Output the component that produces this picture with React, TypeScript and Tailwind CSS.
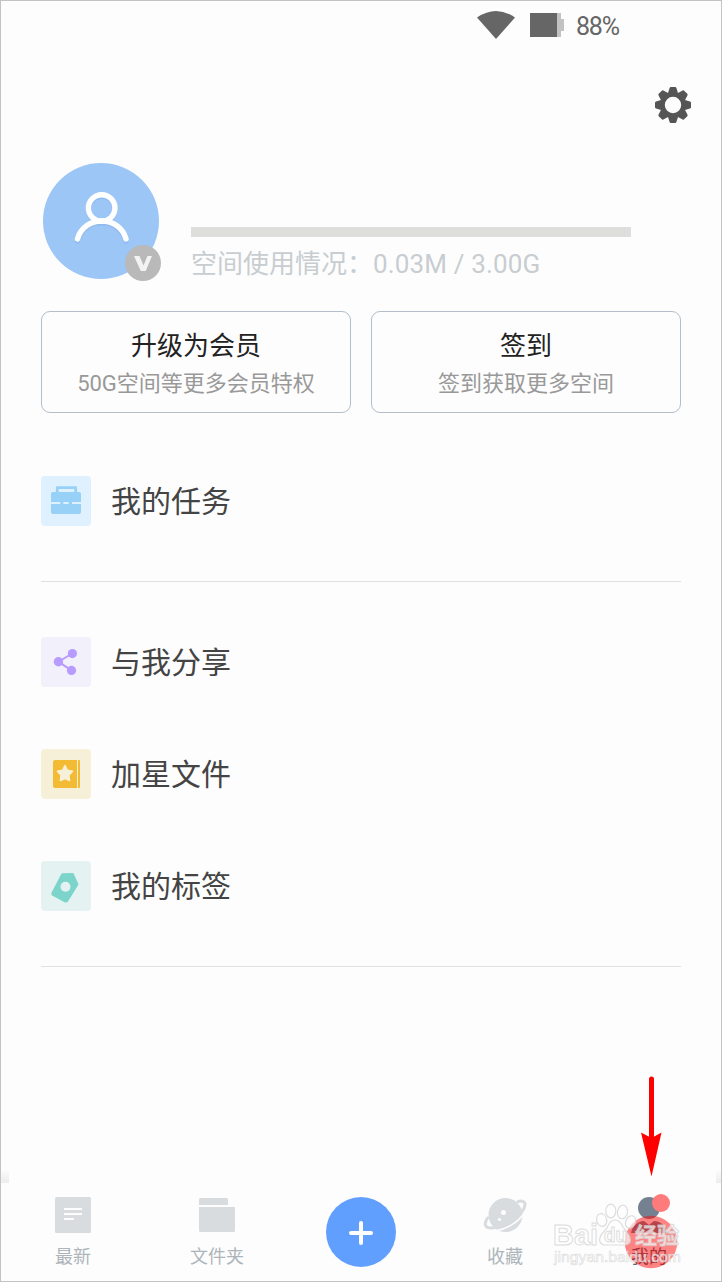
import type { ReactNode } from "react";

const TaskIcon = () => (
  <svg viewBox="0 0 50 50" className="size-[50px]">
    <path d="M16.3 17v-5.300h18.400V17" fill="none" stroke="#97d1f7" strokeWidth="2.800" strokeLinejoin="round" />
    <rect x="10" y="16" width="30" height="22" rx="2" fill="#97d1f7" />
    <path d="M10 27h9.3M22.3 27h5.4M31 27h9" stroke="#dff1ff" strokeWidth="2" />
  </svg>
);

const ShareIcon = () => (
  <svg viewBox="0 0 50 50" className="size-[50px]" fill="#b79bff">
    <path d="M31.3 16.5L17.4 24.7L30.5 33.4" fill="none" stroke="#b79bff" strokeWidth="2" />
    <circle cx="31.4" cy="16.6" r="4.6" />
    <circle cx="17.4" cy="24.7" r="4.7" />
    <circle cx="30.5" cy="33.4" r="4.6" />
  </svg>
);

const StarFileIcon = () => (
  <svg viewBox="0 0 50 50" className="size-[50px]">
    <path d="M14 11h22v28H14a2 2 0 0 1-2-2V13a2 2 0 0 1 2-2z" fill="#f3bb33" />
    <path d="M37 11h1q1 0 1 1v26q0 1-1 1h-1z" fill="#f3bb33" />
    <path d="M24 16.700l2.300 4.600 5.200 1-3.700 4 .7 5.200-4.500-2.100-4.600 2.100.7-5.200-3.700-4 5.200-1z" fill="#f7f0d9" stroke="#f7f0d9" strokeWidth="1.600" strokeLinejoin="round" />
  </svg>
);

const TagIcon = () => (
  <svg viewBox="0 0 50 50" className="size-[50px]">
    <path d="M21.500 13.700L31.500 13.300L36 23.300L26 39.600Q25.300 40.400 24.200 40L12.200 33.600Q11.500 33 11.800 32.100z" fill="#7cd4cb" stroke="#7cd4cb" strokeWidth="2.800" strokeLinejoin="round" />
    <circle cx="24.500" cy="25.800" r="5" fill="#e4f3f2" />
  </svg>
);

const NewestIcon = () => (
  <svg viewBox="0 0 36 36" className="size-9">
    <rect width="36" height="36" rx="1.5" fill="#d8dcdf" />
    <path d="M9 12h18M9 17h18M9 22h10" stroke="#fdfdfd" strokeWidth="2.2" />
  </svg>
);

const FolderIcon = () => (
  <svg viewBox="0 0 36 36" className="size-9" fill="#d8dcdf">
    <path d="M1.500 1H27.500Q29 1 29 2.500V8H0V2.500Q0 1 1.500 1z" />
    <path d="M0 10H36V33.500Q36 35 34.500 35H1.500Q0 35 0 33.500z" />
  </svg>
);

const PlanetIcon = () => (
  <svg viewBox="0 0 44 36" className="h-9 w-11">
    <circle cx="22.500" cy="18" r="17" fill="#d8dcdf" />
    <path d="M13 33.800C23 32 34.500 26 40 17.500" fill="none" stroke="#fdfdfd" strokeWidth="1.600" />
    <path d="M4.500 21C1 26 1.500 30.500 7 31C20 31 41 18 42 8C42.300 4 38.500 3.600 35 4.600" fill="none" stroke="#d8dcdf" strokeWidth="3" strokeLinecap="round" />
    <circle cx="20.500" cy="15.500" r="2.500" fill="#fdfdfd" />
    <circle cx="16.500" cy="22.500" r="1.600" fill="#fdfdfd" />
  </svg>
);

const MineIcon = () => (
  <svg viewBox="0 0 36 36" className="size-9" fill="#758191">
    <circle cx="18" cy="11" r="11" />
    <path d="M0 36C1 29 7 24 13 24L18 28L23 24C30 24 35 29 36 36z" />
  </svg>
);

function MenuRow({ icon, label, bg }: { icon: ReactNode; label: string; bg: string }) {
  return (
    <div className="flex h-[50px] items-center gap-5">
      <div className={`size-[50px] overflow-hidden rounded ${bg}`}>{icon}</div>
      <span className="pt-0.5 text-[30px] leading-[50px] text-[#444]">{label}</span>
    </div>
  );
}

function InfoCard({ title, text }: { title: string; text: string }) {
  return (
    <div className="flex h-[102px] w-[310px] flex-col items-center rounded-[9px] border border-[#b3bec8] pt-[15px]">
      <span className="text-[26px] leading-[38px] text-[#222]">{title}</span>
      <span className="text-[22px] leading-[38px] text-[#999]">{text}</span>
    </div>
  );
}

function Tab({ icon, label, className = "text-[#adb5bb]" }: { icon: ReactNode; label: string; className?: string }) {
  return (
    <div className={`flex w-36 flex-col items-center pt-3.5 ${className}`}>
      {icon}
      <span className="mt-[11px] text-lg leading-[26px]">{label}</span>
    </div>
  );
}

export default function App() {
  return (
    <div className="relative flex h-[1282px] w-[722px] flex-col overflow-hidden border border-[#c3c3c3] bg-[#fdfdfd] font-['Roboto','Noto_Sans_CJK_SC',sans-serif]">
      {/* Status bar */}
      <div className="flex h-12 items-center justify-end pr-[102px] text-[#666]">
        <svg viewBox="0 0 38 28" className="mr-[15px] h-7 w-[38px]" fill="#666">
          <path d="M0 6.500Q19-6.500 38 6.500L19 28z" />
        </svg>
        <svg viewBox="0 0 34 24" className="mr-3 h-6 w-[34px]">
          <path d="M27 0h4v6h3v12h-3v6h-4z" fill="#c2c2c2" />
          <path d="M0 0h27v24H0z" fill="#666" />
        </svg>
        <span className="w-[43px] pt-[3px] text-[25px] leading-6 tracking-[-1.2px]">88%</span>
      </div>

      {/* Settings */}
      <div className="flex h-[114px] justify-end pt-[38px] pr-[30px]">
        <svg viewBox="-18 -18 36 36" className="size-9" fill="#555">
          {[0, 45, 90, 135, 180, 225, 270, 315].map((angle) => (
            <path key={angle} transform={`rotate(${angle})`} d="M-5.300-11L-3.400-17Q-3.100-18-2.200-18H2.200Q3.100-18 3.400-17L5.300-11z" />
          ))}
          <circle r="10.600" fill="none" stroke="#555" strokeWidth="4.800" />
        </svg>
      </div>

      {/* Profile */}
      <div className="flex h-[148px] pl-[42px]">
        <div className="relative size-[116px]">
          <svg viewBox="0 0 116 116" className="size-[116px]">
            <circle cx="58" cy="58" r="58" fill="#9cc6f6" />
            <g fill="none" strokeWidth="5.400" strokeLinecap="round">
              <g stroke="#78a4d8" opacity=".3" transform="translate(0 1.500)">
                <circle cx="58.700" cy="45" r="13.300" />
                <path d="M34.500 76.500C41 52 76.500 52 83 76.500" />
              </g>
              <g stroke="#fff">
                <circle cx="58.700" cy="45" r="13.300" />
                <path d="M34.500 76C41 52 76.500 52 83 76" />
              </g>
            </g>
          </svg>
          <svg viewBox="0 0 36 36" className="absolute -right-0.5 -bottom-0.5 size-9">
            <circle cx="18" cy="18" r="18" fill="#b9b9b9" />
            <path d="M9 11h5.500l4 9.500 4-9.500H27l-6.300 15h-4.900z" fill="#f3f3f3" />
          </svg>
        </div>
        <div className="ml-8 pt-16">
          <div className="h-2.5 w-[440px] bg-[#dededc]" />
          <div className="mt-2 text-[26px] leading-[38px] text-[#c8cdd1]">
            空间使用情况：<span className="tracking-[0.15px]">0.03M / 3.00G</span>
          </div>
        </div>
      </div>

      <div className="flex gap-5 px-10">
        <InfoCard title="升级为会员" text="50G空间等更多会员特权" />
        <InfoCard title="签到" text="签到获取更多空间" />
      </div>

      <div className="mx-10 mt-[63px] border-b border-[#e1e1e1] pb-[55px]">
        <MenuRow icon={<TaskIcon />} label="我的任务" bg="bg-[#dff1ff]" />
      </div>
      <div className="mx-10 flex flex-col gap-[62px] border-b border-[#e1e1e1] pt-[55px] pb-[55px]">
        <MenuRow icon={<ShareIcon />} label="与我分享" bg="bg-[#f2f0fb]" />
        <MenuRow icon={<StarFileIcon />} label="加星文件" bg="bg-[#f7f0d9]" />
        <MenuRow icon={<TagIcon />} label="我的标签" bg="bg-[#e4f3f2]" />
      </div>

      {/* Bottom tabs */}
      <div className="mt-auto flex h-3.5 justify-between">
        <div className="w-2 bg-linear-to-b from-[#fdfdfd] to-[#ececec]" />
        <div className="w-[5px] bg-linear-to-b from-[#fdfdfd] to-[#ececec]" />
      </div>
      <div className="flex h-[98px]">
        <Tab icon={<NewestIcon />} label="最新" />
        <Tab icon={<FolderIcon />} label="文件夹" />
        <div className="flex w-36 justify-center pt-3.5">
          <svg viewBox="0 0 70 70" className="size-[70px]">
            <circle cx="35" cy="35" r="35" fill="#619fff" />
            <path d="M35 26v20M25 36h20" stroke="#fff" strokeWidth="4" strokeLinecap="round" />
          </svg>
        </div>
        <Tab icon={<PlanetIcon />} label="收藏" />
        <Tab icon={<MineIcon />} label="我的" className="text-[#58636f]" />
      </div>

      {/* Arrow and touch marker over the last tab */}
      <svg viewBox="540 1070 181 211" className="absolute right-0 bottom-0 h-[211px] w-[181px]">
        <path d="M651.500 1079V1140" stroke="#f00" strokeWidth="5" strokeLinecap="round" />
        <path d="M641 1132.500L651.500 1138L661.500 1132.500L651.500 1176.500z" fill="#f00" />
        <circle cx="651" cy="1242" r="26.300" fill="#f00" fillOpacity=".48" />
        <circle cx="661" cy="1203" r="9" fill="#ff7b7b" />
        <g fill="#fff" fillOpacity=".65" stroke="#d2d2d2" strokeOpacity=".75" strokeWidth="1.200">
          <ellipse cx="601.700" cy="1220" rx="5" ry="6.500" transform="rotate(-15 601.700 1220)" />
          <ellipse cx="610.800" cy="1211" rx="5" ry="6.800" />
          <ellipse cx="622.500" cy="1212" rx="5" ry="6.800" transform="rotate(8 622.500 1212)" />
          <ellipse cx="630.500" cy="1222" rx="4.800" ry="6.500" transform="rotate(25 630.500 1222)" />
          <path d="M615 1220Q620 1220 623 1227L629 1235Q633 1244 625 1245H605Q597 1244 601 1235L607 1228Q610 1220 615 1220z" />
        </g>
        <g fill="#fff" fillOpacity=".7" stroke="#d0d0d0" strokeOpacity=".75" strokeWidth="1" fontFamily="Liberation Sans, Noto Sans CJK SC, sans-serif">
          <text x="553" y="1244.500" fontSize="30" fontWeight="bold" textLength="45" lengthAdjust="spacingAndGlyphs">Bai</text>
          <text x="604" y="1242" fontSize="20" fontWeight="bold" textLength="23" lengthAdjust="spacingAndGlyphs">du</text>
          <text x="635" y="1243" fontSize="22" fontWeight="bold" textLength="44">经验</text>
          <text x="554" y="1261.500" fontSize="15" strokeWidth=".6" textLength="127" lengthAdjust="spacingAndGlyphs">jingyan.baidu.com</text>
        </g>
      </svg>
    </div>
  );
}
